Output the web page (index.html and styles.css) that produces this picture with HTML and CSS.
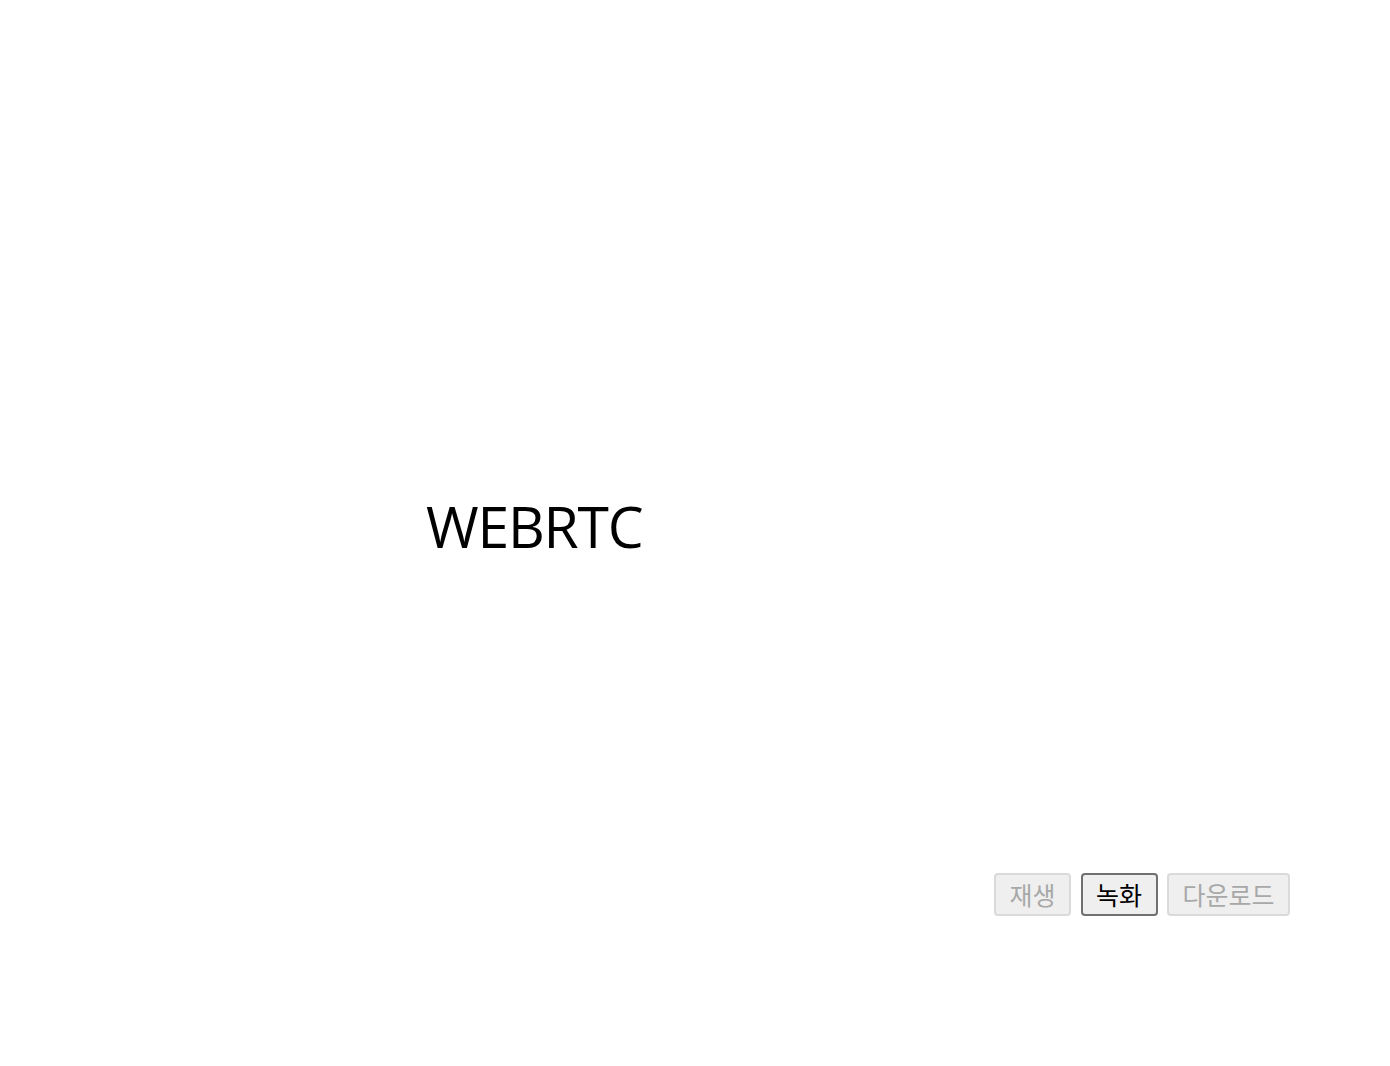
FILE: index.html
```html
<!DOCTYPE html>
<html lang="ko">
<head>
<meta charset="utf-8">
<link rel="stylesheet" href="styles.css">
</head>
<body>
<main class="page">
  <section class="stage">
    <h1 class="title">WEBRTC</h1>
  </section>
  <div class="controls">
    <button class="btn" disabled>재생</button>
    <button class="btn btn-active">녹화</button>
    <button class="btn" disabled>다운로드</button>
  </div>
</main>
</body>
</html>
```
FILE: styles.css
```css
html, body {
  margin: 0;
  padding: 0;
  background: #ffffff;
}
.page {
  width: 1390px;
  height: 1066px;
  display: flex;
  flex-direction: column;
}
.stage {
  height: 873px;
  display: flex;
  flex-direction: column;
}
.title {
  margin: 498px 0 0 426px;
  font-family: "Open Sans", "Noto Sans", sans-serif;
  font-weight: 400;
  font-size: 57px;
  line-height: 57px;
  letter-spacing: -1.2px;
  color: #000;
}
.controls {
  display: flex;
  gap: 9.5px;
  padding-left: 994px;
}
.btn {
  height: 43px;
  box-sizing: border-box;
  padding: 0 13.5px;
  font-family: "Noto Sans CJK KR", "Noto Sans", sans-serif;
  font-size: 25px;
  line-height: 35px;
  border-radius: 4px;
  background: #efefef;
  border: 2px solid #dadada;
  color: #a8a8a8;
}
.btn-active {
  border-color: #707070;
  color: #000;
}
```
